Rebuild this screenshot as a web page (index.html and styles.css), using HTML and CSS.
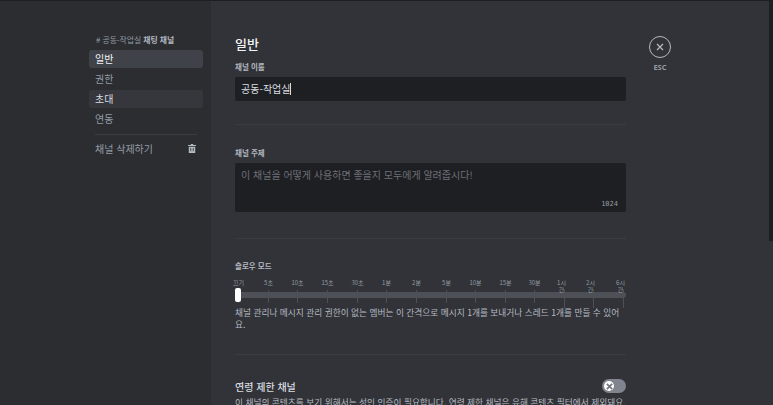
FILE: index.html
```html
<!DOCTYPE html>
<html lang="ko">
<head>
<meta charset="UTF-8">
<meta name="viewport" content="width=device-width, initial-scale=1.0">
<title>채널 설정</title>
<link rel="stylesheet" href="styles.css">
</head>
<body>

<div class="layout">
  <aside class="sidebar">
    <nav class="nav">
      <div class="nav-head"># 공동-작업실 <strong>채팅 채널</strong></div>
      <div class="nav-item active">일반</div>
      <div class="nav-item">권한</div>
      <div class="nav-item hover">초대</div>
      <div class="nav-item">연동</div>
      <div class="nav-sep"></div>
      <div class="nav-item nav-delete">
        <span>채널 삭제하기</span>
        <svg class="trash" width="8" height="9" viewBox="0 0 10 11"><path d="M3.500 0h3v1H10v1.400H0V1h3.500zM1 3.400h8V11H1zM3 5v4h1V5zm3 0v4h1V5z" fill="#b5bac1" fill-rule="evenodd"/></svg>
      </div>
    </nav>
  </aside>

  <main class="content">
    <div class="form">
      <h2>일반</h2>
      <label class="field-label">채널 이름</label>
      <div class="input"><span>공동-작업실</span><i class="caret"></i></div>
      <div class="divider d1"></div>

      <label class="field-label">채널 주제</label>
      <div class="textarea">
        <div class="placeholder">이 채널을 어떻게 사용하면 좋을지 모두에게 알려줍시다!</div>
        <div class="count">1024</div>
      </div>
      <div class="divider d2"></div>

      <label class="field-label">슬로우 모드</label>
      <div class="slider">
        <div class="track"></div>
        <div class="handle"></div>
        <div class="mark" style="left:3px"><span>끄기</span></div>
        <div class="mark" style="left:33px"><span>5초</span></div>
        <div class="mark" style="left:62px"><span>10초</span></div>
        <div class="mark" style="left:92px"><span>15초</span></div>
        <div class="mark" style="left:122px"><span>30초</span></div>
        <div class="mark" style="left:151px"><span>1분</span></div>
        <div class="mark" style="left:181px"><span>2분</span></div>
        <div class="mark" style="left:211px"><span>5분</span></div>
        <div class="mark" style="left:240px"><span>10분</span></div>
        <div class="mark" style="left:270px"><span>15분</span></div>
        <div class="mark" style="left:299px"><span>30분</span></div>
        <div class="mark long" style="left:329px"><span>1시간</span></div>
        <div class="mark long" style="left:358px"><span>2시간</span></div>
        <div class="mark long" style="left:388px"><span>6시간</span></div>
      </div>
      <p class="note">채널 관리나 메시지 관리 권한이 없는 멤버는 이 간격으로 메시지 1개를 보내거나 스레드 1개를 만들 수 있어요.</p>
      <div class="divider d3"></div>

      <div class="age-row">
        <span class="age-title">연령 제한 채널</span>
        <div class="toggle">
          <div class="knob"><svg width="7" height="7" viewBox="0 0 8 8"><path d="M1 1l6 6M7 1L1 7" stroke="#72767d" stroke-width="2"/></svg></div>
        </div>
      </div>
      <p class="note age-note">이 채널의 콘텐츠를 보기 위해서는 성인 인증이 필요합니다. 연령 제한 채널은 유해 콘텐츠 필터에서 제외돼요.</p>
    </div>

    <div class="esc">
      <div class="esc-circle"><svg width="10" height="10" viewBox="0 0 10 10"><path d="M2 2l6 6M8 2L2 8" stroke="#b5bac1" stroke-width="1.200"/></svg></div>
      <div class="esc-text">ESC</div>
    </div>
    <div class="scrollbar"></div>
  </main>
</div>

</body>
</html>
```

FILE: styles.css
```css
html, body {
  margin: 0;
  height: 100%;
  overflow: hidden;
}

body {
  background-color: #313338;
  font-family: "Noto Sans CJK KR", "Noto Sans", sans-serif;
  color: #b5bac1;
}

.layout {
  display: flex;
  height: 405px;
  border-top: 1px solid #1e1f22;
  box-sizing: border-box;
}

.sidebar {
  width: 211px;
  flex-shrink: 0;
  background-color: #2b2d31;
  display: flex;
  justify-content: flex-end;
}

.nav {
  width: 114px;
  margin-right: 8px;
  padding-top: 32px;
}

.nav-head {
  font-size: 7.800px;
  line-height: 14px;
  height: 17px;
  padding-left: 7px;
  color: #949ba4;
}

.nav-head strong {
  color: #b5bac1;
}

.nav-item {
  height: 18px;
  line-height: 17px;
  margin-bottom: 2px;
  padding-left: 6px;
  border-radius: 3px;
  font-size: 10px;
  color: #949ba4;
}

.nav-item.active {
  background-color: #404249;
  color: #f2f3f5;
}

.nav-item.hover {
  background-color: #35373c;
  color: #dbdee1;
}

.nav-sep {
  height: 1px;
  margin: 6px 6px 4px;
  background-color: #3a3c42;
}

.nav-delete {
  display: flex;
  align-items: center;
  justify-content: space-between;
  padding-right: 7px;
}

.content {
  flex: 1;
  display: flex;
  position: relative;
  padding-left: 24px;
}

.form {
  width: 391px;
  padding-top: 34px;
}

h2 {
  margin: 0;
  font-size: 13px;
  line-height: 18px;
  color: #f2f3f5;
  font-weight: 500;
}

.field-label {
  display: block;
  font-size: 7.500px;
  line-height: 10px;
  font-weight: 700;
  color: #b5bac1;
}

h2 + .field-label {
  margin-top: 9px;
}

.input {
  margin-top: 5px;
  height: 24px;
  line-height: 24px;
  background-color: #1e1f22;
  border-radius: 2px;
  padding-left: 6px;
  font-size: 10px;
  color: #dbdee1;
  display: flex;
  align-items: center;
}

.caret {
  width: 1px;
  height: 12px;
  background-color: #dbdee1;
}

.divider {
  height: 1px;
  background-color: #3a3c42;
}

.d1 {
  margin: 23px 0 23px;
}

.textarea {
  margin-top: 5px;
  height: 49px;
  background-color: #1e1f22;
  border-radius: 2px;
  padding: 5px 6px 0;
  box-sizing: border-box;
  position: relative;
  font-size: 10px;
  line-height: 14px;
}

.placeholder {
  color: #6d6f78;
}

.count {
  position: absolute;
  right: 8px;
  bottom: 3px;
  font-family: "DejaVu Sans Mono", monospace;
  font-size: 7px;
  line-height: 10px;
  color: #949ba4;
}

.d2 {
  margin: 26px 0 22px;
}

.slider {
  position: relative;
  height: 21px;
  margin-top: 15px;
}

.track {
  position: absolute;
  left: 0;
  top: 6px;
  width: 391px;
  height: 6px;
  border-radius: 3px;
  background-color: #4e5058;
}

.handle {
  position: absolute;
  left: 0;
  top: 2px;
  width: 6px;
  height: 14px;
  border-radius: 2px;
  background-color: #fff;
  z-index: 1;
}

.mark {
  position: absolute;
  top: 4px;
  width: 1px;
  height: 13px;
  background-color: #4e5058;
}

.mark.long {
  height: 18px;
}

.mark span {
  position: absolute;
  top: -11px;
  left: -8px;
  width: 17px;
  text-align: center;
  font-size: 6px;
  line-height: 7px;
  color: #949ba4;
}

.mark.long span {
  left: -8px;
  width: 11px;
}

.note {
  margin: 0;
  font-size: 8.700px;
  line-height: 12px;
  color: #b5bac1;
}

.d3 {
  margin: 23px 0 24px;
}

.age-row {
  display: flex;
  justify-content: space-between;
  align-items: center;
  height: 14px;
}

.age-title {
  font-size: 10px;
  color: #dbdee1;
  font-weight: 500;
}

.toggle {
  width: 24px;
  height: 14px;
  border-radius: 7px;
  background-color: #80848e;
  display: flex;
  align-items: center;
  padding-left: 2px;
  box-sizing: border-box;
}

.knob {
  width: 10px;
  height: 10px;
  border-radius: 50%;
  background-color: #fff;
  display: flex;
  align-items: center;
  justify-content: center;
}

.age-note {
  margin-top: 4px;
}

.esc {
  margin-left: 23px;
  padding-top: 35px;
  width: 22px;
  display: flex;
  flex-direction: column;
  align-items: center;
}

.esc-circle {
  width: 20px;
  height: 20px;
  border: 1px solid #b5bac1;
  border-radius: 50%;
  display: flex;
  align-items: center;
  justify-content: center;
  flex-shrink: 0;
}

.esc-text {
  margin-top: 4px;
  font-family: "Noto Sans", sans-serif;
  font-size: 7.500px;
  line-height: 10px;
  font-weight: 700;
  color: #949ba4;
}

.scrollbar {
  position: absolute;
  right: 0;
  top: 0;
  width: 4px;
  height: 240px;
  background-color: #1e1f22;
}
```
